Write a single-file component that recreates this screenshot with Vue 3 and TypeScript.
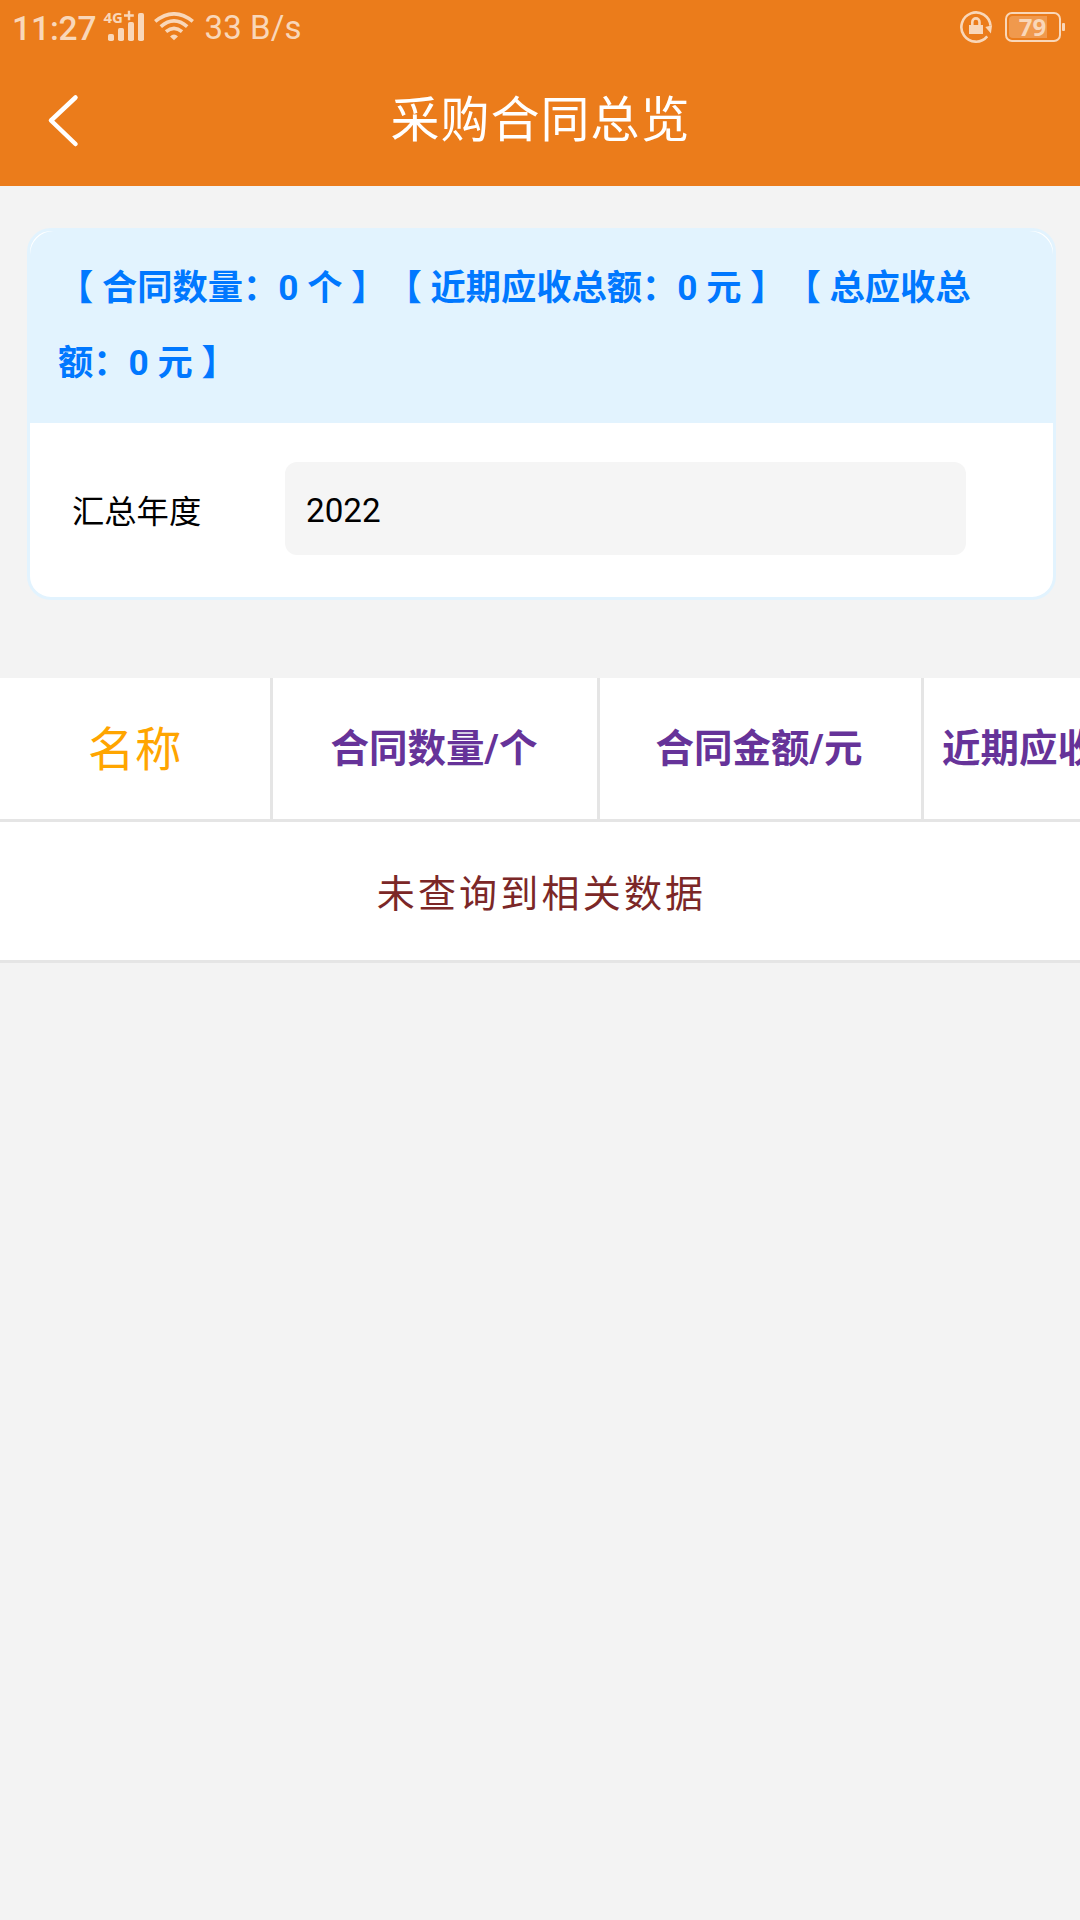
<script setup lang="ts">
interface Stat { label: string; value: number; unit: string }

const stats: Stat[] = [
  { label: '合同数量', value: 0, unit: '个' },
  { label: '近期应收总额', value: 0, unit: '元' },
  { label: '总应收总额', value: 0, unit: '元' },
]
const summary = stats.map(s => `【 ${s.label}：${s.value} ${s.unit} 】`).join('')
const columns: string[] = ['名称', '合同数量/个', '合同金额/元', '近期应收总额/元']
const year = '2022'
</script>

<template>
  <div class="page">
    <header class="top">
      <div class="status">
        <span class="clock">11:27</span>
        <svg class="signal" width="42" height="34" viewBox="0 0 42 34">
          <text x="-0.5" y="15" class="net">4G</text>
          <path d="M20 7.500h9.800M25 2.800v9.400" stroke="#f9d7b9" stroke-width="2.400" />
          <g fill="#f9d7b9">
            <rect x="4" y="26" width="6" height="7" rx="1.8" />
            <rect x="14" y="20" width="6" height="13" rx="1.8" />
            <rect x="24" y="14" width="6" height="19" rx="1.8" />
            <rect x="34" y="5" width="6" height="28" rx="1.8" />
          </g>
        </svg>
        <svg class="wifi" width="40" height="30" viewBox="0 0 40 30">
          <g fill="none" stroke="#f9d7b9" stroke-width="3.700">
            <path d="M1.200 9.400Q20 -5.600 38.800 9.400" />
            <path d="M6.800 14.600Q20 3.200 33.200 14.600" />
            <path d="M12 19.600Q20 13.200 28 19.600" />
          </g>
          <path d="M20 28.300l-4-3.900q4-3.800 8 0z" fill="#f9d7b9" />
        </svg>
        <span class="speed">33 B/s</span>
        <span class="spacer"></span>
        <svg class="lock" width="34" height="34" viewBox="0 0 34 34">
          <path d="M28.200 26.400A14.600 14.600 0 1 1 31.500 15.700" fill="none" stroke="#f9d7b9" stroke-width="2.600" />
          <path d="M26.300 17l6.800-1.800-1.200 8.300z" fill="#f9d7b9" />
          <rect x="10" y="15" width="14" height="9" fill="#f9d7b9" />
          <path d="M13.300 15.500v-3.500a3.600 3.600 0 0 1 7.200 0v3.500" fill="none" stroke="#f9d7b9" stroke-width="2.600" />
        </svg>
        <svg class="battery" width="62" height="32" viewBox="0 0 62 32">
          <rect x="1" y="2" width="54" height="28" rx="6" fill="none" stroke="#f9d7b9" stroke-width="2" />
          <path d="M8 5h34v22H8q-4 0-4-4V9q0-4 4-4z" fill="#f0994d" />
          <rect x="57" y="12" width="3" height="8" rx="1" fill="#f9d7b9" />
          <text x="13.800" y="24.800" class="level">79</text>
        </svg>
      </div>
      <div class="nav">
        <svg class="back" width="36" height="56" viewBox="0 0 36 56">
          <path d="M30.500 5.500L6 28.500l24.500 23.500" fill="none" stroke="#fff" stroke-width="4.500" stroke-linecap="round" stroke-linejoin="round" />
        </svg>
        <h1>采购合同总览</h1>
      </div>
    </header>

    <section class="card">
      <div class="summary">{{ summary }}</div>
      <div class="filter">
        <label>汇总年度</label>
        <div class="field">{{ year }}</div>
      </div>
    </section>

    <section class="table">
      <div class="head">
        <div v-for="c in columns" :key="c" class="cell">{{ c }}</div>
      </div>
      <div class="empty">未查询到相关数据</div>
    </section>
  </div>
</template>

<style>
body { background: #f3f3f3; }
</style>

<style scoped>
.page {
  width: 1080px;
  height: 1920px;
  overflow: hidden;
  background: #f3f3f3;
  font-family: Roboto, "Noto Sans CJK SC", sans-serif;
}
.top { height: 186px; background: #eb7c1b; }
.status {
  display: flex;
  align-items: center;
  height: 54px;
  color: #f9d7b9;
}
.clock { width: 91px; margin-left: 12px; padding-top: 3px; font-size: 33.500px; font-weight: 500; line-height: 54px; letter-spacing: -0.100px; white-space: nowrap; }
.signal { margin: -4px 0 0 1px; overflow: visible; }
.net { font: 700 15px "Noto Sans", sans-serif; fill: #f9d7b9; }
.wifi { margin: 0 11px 0 8px; }
.speed { font-size: 33px; line-height: 53px; letter-spacing: 0.100px; margin-left: -0.500px; }
.spacer { flex: 1; }
.lock { margin-right: 12px; }
.battery { margin-right: 13px; }
.level { font: 700 24px "Noto Sans", sans-serif; fill: #f9d7b9; }
.nav {
  display: grid;
  grid-template-columns: 100px 1fr 100px;
  align-items: center;
  height: 132px;
}
.back { margin: 0 0 0 45px; }
h1 {
  margin: 0;
  padding: 2px 0 0 1px;
  text-align: center;
  color: #fff;
  font-size: 49px;
  font-weight: 400;
  letter-spacing: 1px;
  line-height: 70px;
}
.card {
  box-sizing: border-box;
  width: 1029px;
  height: 372px;
  margin: 42px 0 0 27px;
  border: 3px solid #e2f3fe;
  border-radius: 24px;
  background: #fff;
}
.summary {
  box-sizing: border-box;
  height: 192px;
  padding: 20px 28px;
  border-radius: 24px 24px 0 0;
  background: #e2f3fe;
  color: #0078ff;
  font-size: 35.260px;
  font-weight: 700;
  line-height: 75px;
  text-spacing-trim: space-all;
}
.filter {
  display: flex;
  align-items: center;
  padding: 39px 0 0 42px;
}
label { width: 213px; font-size: 32.300px; color: #000; }
.field {
  box-sizing: border-box;
  width: 681px;
  height: 93px;
  padding-left: 21px;
  border-radius: 12px;
  background: #f5f5f5;
  font-size: 33.200px;
  line-height: 97px;
}
.table { margin-top: 78px; background: #fff; }
.head { display: flex; height: 141px; border-bottom: 3px solid #e5e5e5; }
.cell {
  flex: none;
  box-sizing: border-box;
  width: 327px;
  padding-right: 2px;
  border-right: 3px solid #e5e5e5;
  text-align: center;
  line-height: 142px;
  font-size: 38.500px;
  font-weight: 700;
  color: #663399;
  white-space: nowrap;
}
.cell:first-child { width: 273px; padding-right: 0; font-size: 46.500px; line-height: 144px; font-weight: 400; letter-spacing: 0.500px; color: #ffa500; }
.cell:nth-child(3) { width: 324px; padding-right: 3px; }
.cell:nth-child(4) { padding-right: 4px; }
.empty {
  height: 138px;
  padding-left: 3px;
  border-bottom: 3px solid #e5e5e5;
  text-align: center;
  line-height: 144px;
  font-size: 38px;
  letter-spacing: 3.200px;
  color: #7b2727;
}
</style>
